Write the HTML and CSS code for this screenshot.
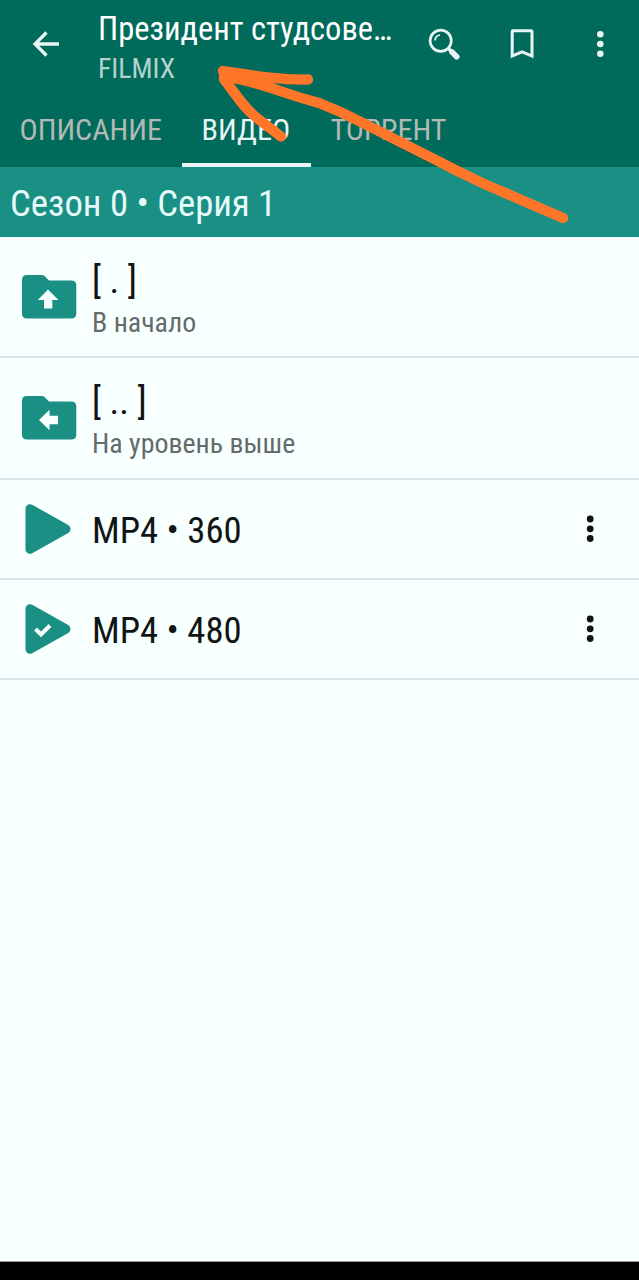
FILE: index.html
```
<!DOCTYPE html>
<html lang="ru">
<head>
<meta charset="utf-8">
<title>FILMIX</title>
<link rel="stylesheet" href="styles.css">
</head>
<body>
<div class="screen">
  <header class="appbar">
    <div class="toolbar">
      <svg class="back" width="28" height="28" viewBox="0 0 28 28"><path d="M27 14H3M14.500 2.500 3 14l11.500 11.500" fill="none" stroke="currentColor" stroke-width="3.300"/></svg>
      <div class="titles">
        <div class="title">Президент студсове…</div>
        <div class="source">FILMIX</div>
      </div>
      <div class="actions">
        <svg width="34" height="34" viewBox="0 0 34 34" fill="none" stroke="currentColor"><circle cx="13.700" cy="13.700" r="10.600" stroke-width="2.700"/><path d="M8 13.500a6 6 0 0 1 5-5.500" stroke-width="1.700"/><path d="m21.700 21.700 3 3" stroke-width="3.500"/><path d="m25 25 4.700 4.700" stroke-width="5.700" stroke-linecap="round"/></svg>
        <svg width="34" height="34" viewBox="0 0 34 34"><path d="M5.700 31.300V4.500Q5.700 2.200 8 2.200H26.200Q28.500 2.200 28.500 4.500V31.300L17.100 26.600ZM8.700 26.800 17.100 23.300 25.500 26.800V5.200H8.700Z" fill="currentColor" fill-rule="evenodd"/></svg>
        <svg width="34" height="34" viewBox="0 0 34 34" fill="currentColor"><circle cx="17.300" cy="7.200" r="3.300"/><circle cx="17.300" cy="17" r="3.300"/><circle cx="17.300" cy="26.700" r="3.300"/></svg>
      </div>
    </div>
    <nav class="tabs">
      <div class="tab tab-about">ОПИСАНИЕ</div>
      <div class="tab tab-video active">ВИДЕО</div>
      <div class="tab tab-torrent">ТОРРЕНТ</div>
    </nav>
  </header>
  <div class="crumb">Сезон 0 • Серия 1</div>
  <main class="list">
    <div class="row folder">
      <svg class="icon" width="56" height="46" viewBox="0 0 56 46"><path d="M6 1H21Q23 1 24.500 3L28 6.500H50Q55.300 6.500 55.300 11.500V39.500Q55.300 44.500 50 44.500H6Q1 44.500 1 39.500V6Q1 1 6 1Z" fill="#1a8f84"/><path d="M27 15.500 37.500 26H31.300V34.500H23V26H16.800Z" fill="#f7ffff"/></svg>
      <div class="texts"><div class="name">[ . ]</div><div class="note">В начало</div></div>
    </div>
    <div class="row folder parent">
      <svg class="icon" width="56" height="46" viewBox="0 0 56 46"><path d="M6 1H21Q23 1 24.500 3L28 6.500H50Q55.300 6.500 55.300 11.500V39.500Q55.300 44.500 50 44.500H6Q1 44.500 1 39.500V6Q1 1 6 1Z" fill="#1a8f84"/><path d="M18 25 28.500 14.800V20.800H37V29.200H28.500V35.300Z" fill="#f7ffff"/></svg>
      <div class="texts"><div class="name">[ .. ]</div><div class="note">На уровень выше</div></div>
    </div>
    <div class="row file">
      <svg class="icon" width="56" height="52" viewBox="0 0 56 52"><path d="M9 5.700 45 26 9 46.300Z" fill="#1a8f84" stroke="#1a8f84" stroke-width="9" stroke-linejoin="round"/></svg>
      <div class="name file-name">MP4 • 360</div>
      <svg class="more" width="12" height="34" viewBox="0 0 12 34"><circle cx="6.200" cy="7" r="3.400"/><circle cx="6.200" cy="16.800" r="3.400"/><circle cx="6.200" cy="26.500" r="3.400"/></svg>
    </div>
    <div class="row file">
      <svg class="icon" width="56" height="52" viewBox="0 0 56 52"><path d="M9 5.700 45 26 9 46.300Z" fill="#1a8f84" stroke="#1a8f84" stroke-width="9" stroke-linejoin="round"/><path d="m14.500 26 5.500 5.500 9-9" fill="none" stroke="#f7ffff" stroke-width="4"/></svg>
      <div class="name file-name">MP4 • 480</div>
      <svg class="more" width="12" height="34" viewBox="0 0 12 34"><circle cx="6.200" cy="7" r="3.400"/><circle cx="6.200" cy="16.800" r="3.400"/><circle cx="6.200" cy="26.500" r="3.400"/></svg>
    </div>
  </main>
  <div class="navbar"></div>
  <svg class="arrow" width="639" height="240" viewBox="0 0 639 240"><path d="M563 218Q530 204 503 192Q488 186 475 179.500Q455 170 438 161Q400 142 361 122Q340 111 319 103Q300 98 280 91Q255 82 224 76M308 79.500C276 80 250 75 223 71M224 79C237 96 244 108 257 118L281 136.500" fill="none" stroke="#ff7628" stroke-width="10.300" stroke-linecap="round" stroke-linejoin="round"/><path d="M222 70 268 77 265 86 232 81Z" fill="#ff7628"/></svg>
</div>
</body>
</html>
```
FILE: styles.css
```
* { box-sizing: border-box; }
body { margin: 0; font-family: "Roboto Condensed", Roboto, "Open Sans", sans-serif; font-stretch: 75%; background: #f7ffff; }
.screen { position: relative; width: 639px; height: 1280px; display: flex; flex-direction: column; overflow: hidden; }
.appbar { height: 167px; background: #006a5b; color: #e8f5f4; display: flex; flex-direction: column; }
.toolbar { height: 88px; display: flex; align-items: center; padding-left: 32px; }
.titles { width: 310px; margin-left: 38px; padding-top: 6px; white-space: nowrap; }
.title { font-size: 32.5px; line-height: 42px; height: 43px; color: #fff; }
.source { font-size: 27.8px; line-height: 36px; color: #b1d3ce; }
.actions { display: flex; gap: 44px; margin-left: 19px; }
.tabs { height: 79px; display: flex; }
.tab { padding: 20px 20px 0 19.5px; font-size: 30.2px; line-height: 44px; color: #b3b9b5; border-bottom: 4px solid transparent; white-space: nowrap; }
.tab-about { width: 182px; }
.tab-video { width: 129px; }
.tab-torrent { width: 154px; }
.tab.active { color: #e8f5f4; border-color: #e8f5f4; }
.crumb { height: 70px; padding: 1px 10px 0; background: #1a8f84; color: #e6fafa; font-size: 36.7px; line-height: 72px; }
.list { flex: 1; }
.row { display: flex; align-items: center; border-bottom: 2px solid #d9e2e2; padding-left: 21px; }
.folder { height: 121px; }
.folder.parent { height: 122px; }
.file { height: 100px; }
.texts { margin-left: 15px; height: 110px; padding-top: 17px; }
.name { font-size: 36.7px; line-height: 44px; color: #101414; }
.note { font-size: 27.9px; line-height: 40px; color: #656b6b; }
.file-name { width: 477px; margin-left: 15px; padding-top: 4px; }
.more { margin-left: 15px; fill: #101414; }
.navbar { height: 19px; background: #000; border-top: 1px solid #999; }
.arrow { position: absolute; left: 0; top: 0; pointer-events: none; }
```
